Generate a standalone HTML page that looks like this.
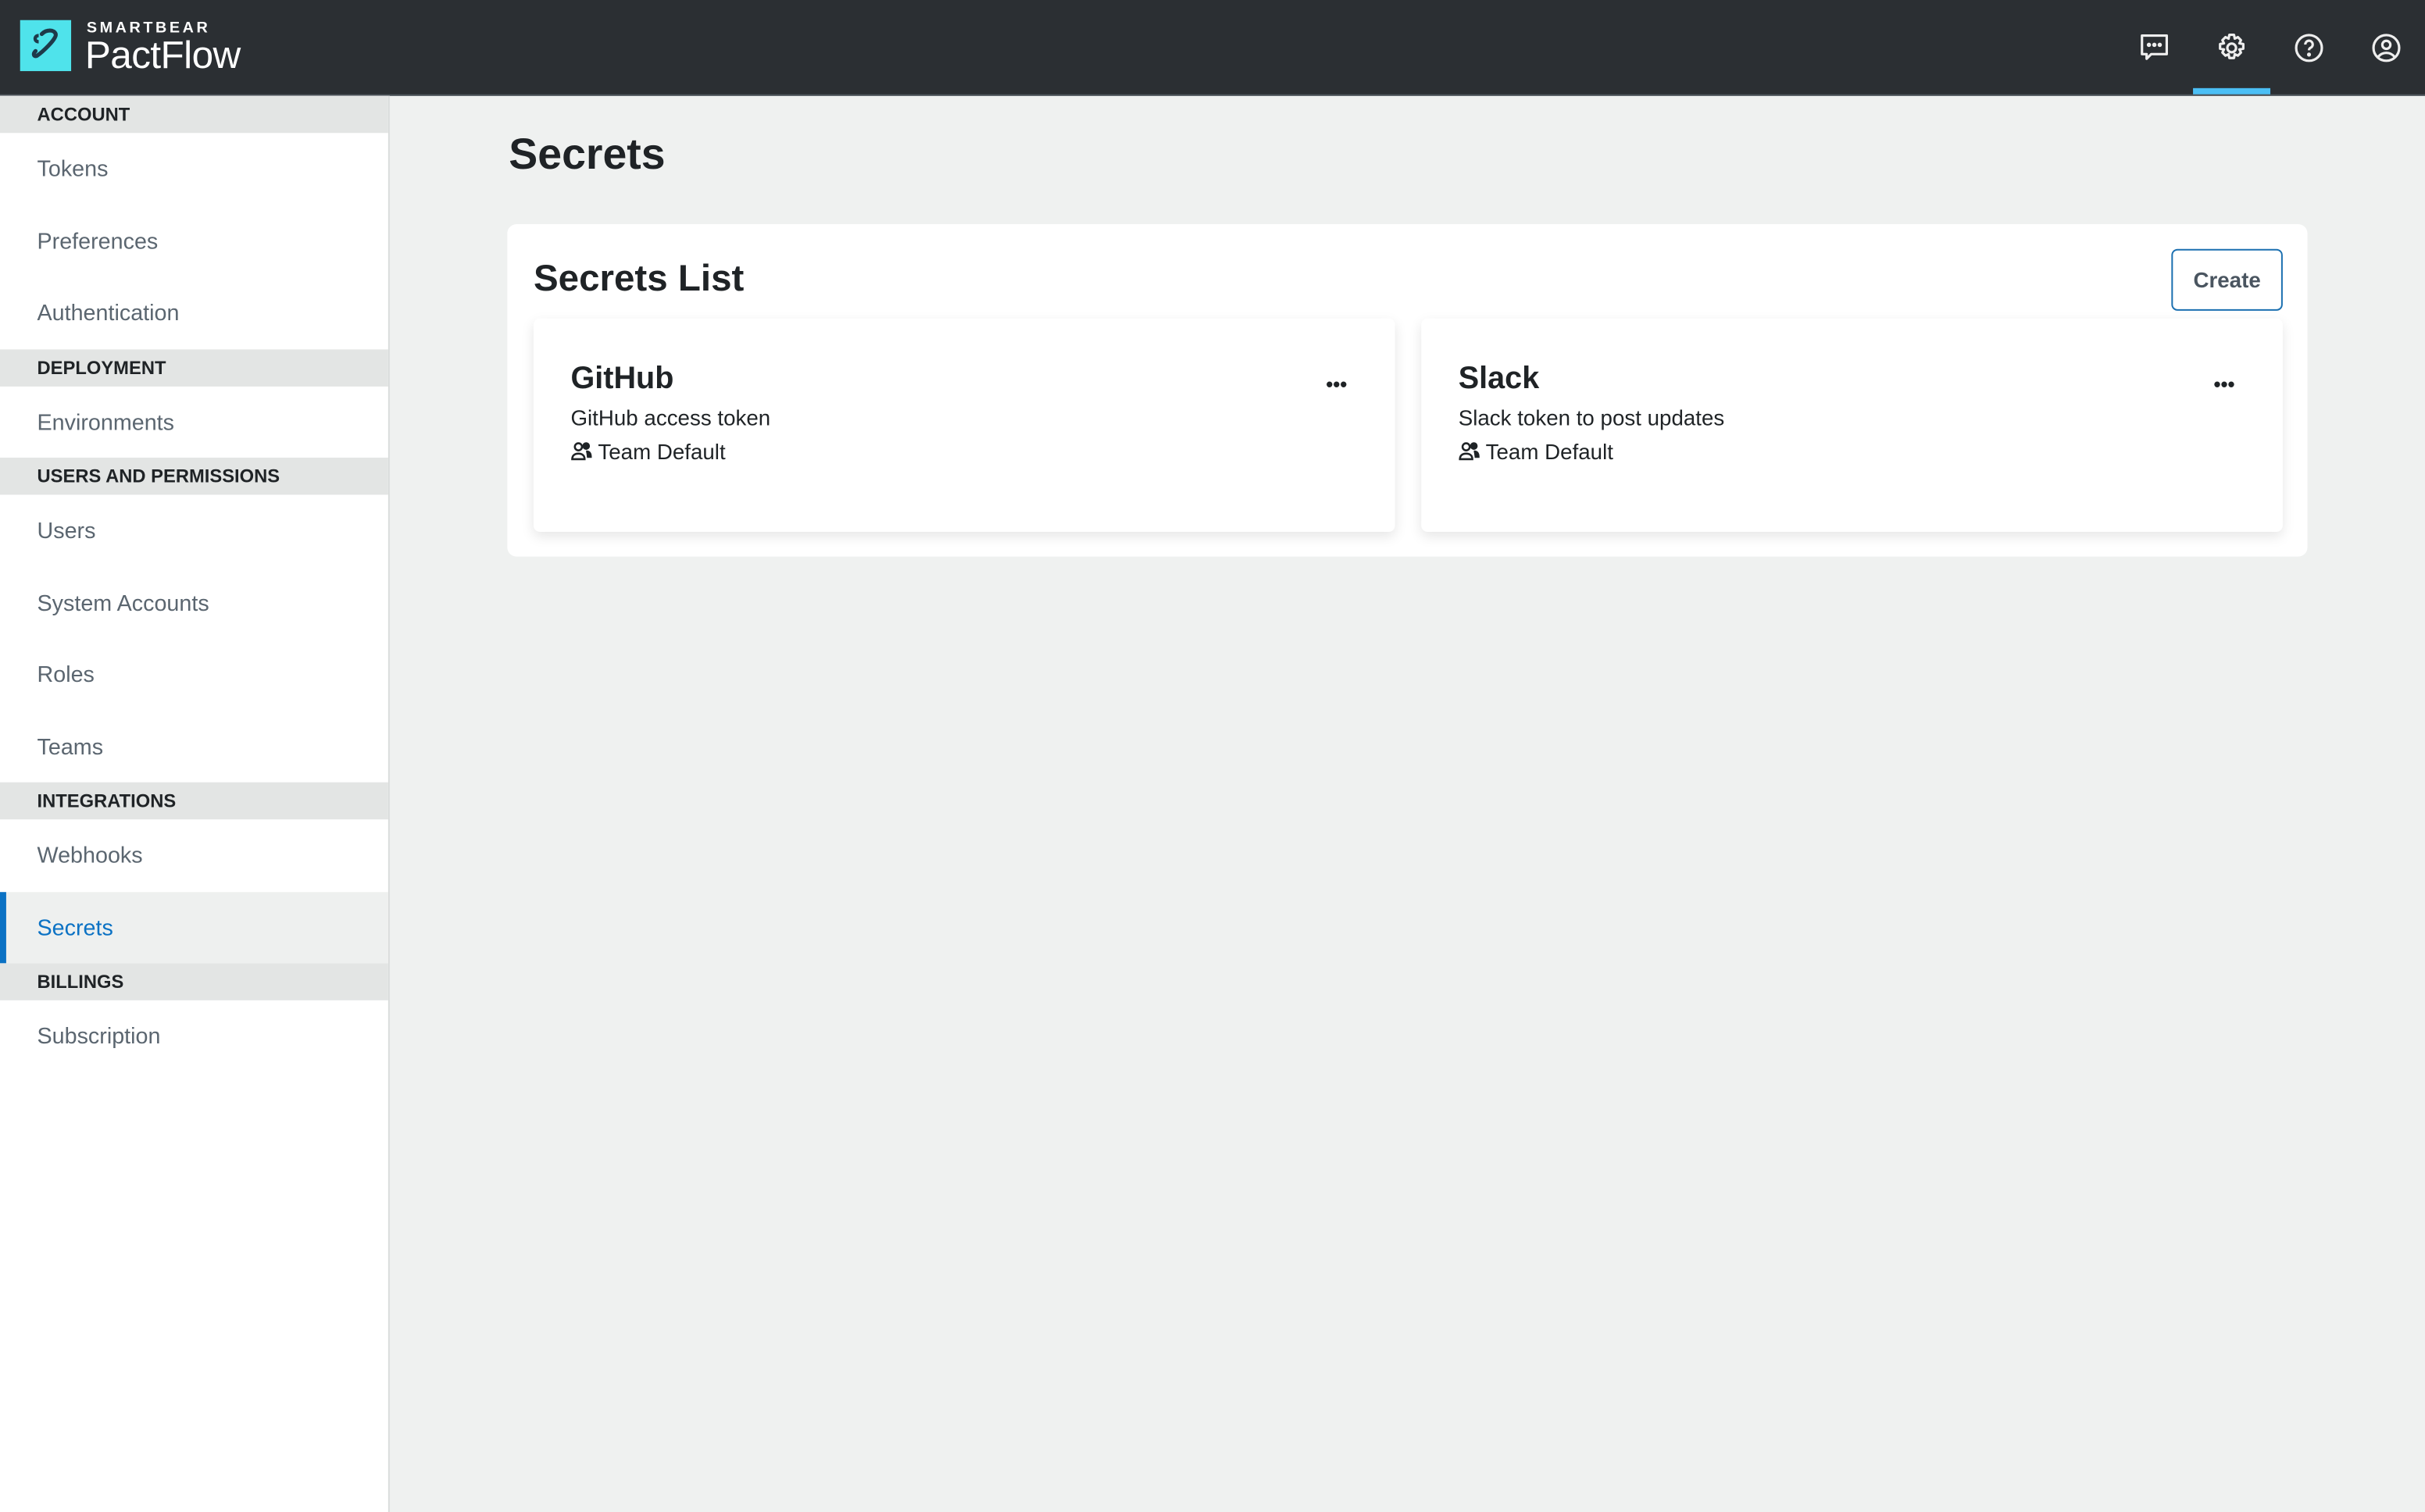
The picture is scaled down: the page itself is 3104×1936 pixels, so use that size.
<!DOCTYPE html>
<html><head><meta charset="utf-8"><style>
html,body{margin:0;padding:0;width:3104px;height:1936px;overflow:hidden;background:#eff1f0}
#w{position:absolute;left:0;top:0;width:1568px;height:978px;transform:scale(1.97959);transform-origin:0 0;font-family:"Liberation Sans",sans-serif;background:#eff1f0}
.hdr{position:absolute;left:0;top:0;width:1568px;height:62px;background:#2b2f33;border-bottom:1px solid #4e565c;box-sizing:border-box}
.logo{position:absolute;left:13px;top:13px;width:33px;height:33px;background:#4fe3eb}
.sb{position:absolute;left:56px;top:13px;color:#fff;font-size:10px;letter-spacing:1.8px;font-weight:bold}
.pf{position:absolute;left:55px;top:22px;color:#fff;font-size:25px;font-weight:normal;letter-spacing:-0.3px}
.ic{position:absolute;top:21px;width:20px;height:20px}
.ul{position:absolute;left:1418px;top:57px;width:50px;height:4px;background:#4bbff5}
.side{position:absolute;left:0;top:62px;width:251px;height:916px;background:#fff;border-right:1px solid #d9dcdb}
.sec{height:24px;background:#e3e5e4;font-size:12px;font-weight:bold;color:#1f2326;padding-left:24px;line-height:24px}
.it{height:46.5px;line-height:49px;padding-left:24px;font-size:14.5px;color:#5b6670;position:relative}
.it.act{background:#eef0ef;color:#0b72c4}
.it.act:before{content:"";position:absolute;left:0;top:0;bottom:0;width:4px;background:#0b72c4}
h1{position:absolute;left:329px;top:84px;margin:0;font-size:28px;color:#1f2326;font-weight:bold}
.panel{position:absolute;left:328px;top:145px;width:1164px;height:215px;background:#fff;border-radius:6px}
.pt{position:absolute;left:17px;top:22px;font-size:24px;font-weight:bold;color:#1f2326}
.btn{position:absolute;left:1076px;top:16px;width:70px;height:38px;border:1px solid #1a6fb0;border-radius:4px;font-size:14px;font-weight:bold;color:#4a5560;text-align:center;line-height:38px}
.card{position:absolute;top:61px;width:557px;height:138px;background:#fff;border-radius:4px;box-shadow:0 3px 8px rgba(0,0,0,.1)}
.ct{position:absolute;left:24px;top:28px;font-size:20px;font-weight:bold;color:#1f2326}
.cd{position:absolute;left:24px;top:56px;font-size:14px;color:#1f2326}
.cm{position:absolute;left:24px;top:78px;font-size:14px;color:#1f2326}
.dots{position:absolute;right:31px;top:35px;font-size:13px;font-weight:bold;color:#1f2326;letter-spacing:0}
</style></head><body><div id="w">
<div class="hdr">
<div class="logo"><svg width="33" height="33" viewBox="0 0 33 33"><path d="M14 9c3-3 8-3 9 0s-9 12-12 14c-2 1-3-1-1-3" fill="none" stroke="#1e3a4a" stroke-width="2.6" stroke-linecap="round"/><path d="M12 14c-3 0-3-4 0-4" fill="none" stroke="#1e3a4a" stroke-width="2.2"/></svg></div>
<div class="sb">SMARTBEAR</div>
<div class="pf">PactFlow</div>
<svg class="ic" style="left:1383px" viewBox="0 0 20 20" fill="none" stroke="#eee" stroke-width="1.6"><path d="M2 2h16v12H8l-3 3v-3H2z" stroke-linejoin="round"/><circle cx="6.5" cy="8" r=".6" fill="#eee"/><circle cx="10" cy="8" r=".6" fill="#eee"/><circle cx="13.5" cy="8" r=".6" fill="#eee"/></svg>
<svg class="ic" style="left:1433px" viewBox="0 0 20 20" fill="none" stroke="#eee" stroke-width="1.6"><path d="M8.5 1.5h3l.5 2.5 2-1 2 2-1 2 2.5.5v3l-2.5.5 1 2-2 2-2-1-.5 2.5h-3l-.5-2.5-2 1-2-2 1-2-2.5-.5v-3l2.5-.5-1-2 2-2 2 1z" stroke-linejoin="round"/><circle cx="10" cy="10" r="2.8"/></svg>
<svg class="ic" style="left:1483px" viewBox="0 0 20 20" fill="none" stroke="#eee" stroke-width="1.6"><circle cx="10" cy="10" r="8.3"/><path d="M7.6 7.8a2.4 2.4 0 1 1 3.4 2.1c-.7.4-1 .8-1 1.6"/><circle cx="10" cy="14.3" r=".5" fill="#eee"/></svg>
<svg class="ic" style="left:1533px" viewBox="0 0 20 20" fill="none" stroke="#eee" stroke-width="1.6"><circle cx="10" cy="10" r="8.3"/><circle cx="10" cy="8" r="2.6"/><path d="M4.5 16c1.5-2 3.3-2.8 5.5-2.8s4 .8 5.5 2.8"/></svg>
<div class="ul"></div>
</div>
<div class="side">
<div class="sec">ACCOUNT</div>
<div class="it">Tokens</div><div class="it">Preferences</div><div class="it">Authentication</div>
<div class="sec">DEPLOYMENT</div>
<div class="it">Environments</div>
<div class="sec">USERS AND PERMISSIONS</div>
<div class="it">Users</div><div class="it">System Accounts</div><div class="it">Roles</div><div class="it">Teams</div>
<div class="sec">INTEGRATIONS</div>
<div class="it">Webhooks</div><div class="it act">Secrets</div>
<div class="sec">BILLINGS</div>
<div class="it">Subscription</div>
</div>
<h1>Secrets</h1>
<div class="panel">
<div class="pt">Secrets List</div>
<div class="btn">Create</div>
<div class="card" style="left:17px"><div class="ct">GitHub</div><div class="cd">GitHub access token</div><div class="cm"><svg width="14" height="13" viewBox="0 0 14 13" fill="none" stroke="#1f2326" stroke-width="1.3" style="vertical-align:-1px"><circle cx="5" cy="4" r="2.3"/><path d="M1 12c0-2.5 1.8-3.6 4-3.6s4 1.1 4 3.6z"/><circle cx="10" cy="3.5" r="1.8" fill="#1f2326"/><path d="M10 7c2 0 3 1 3 3.5h-2.5" fill="#1f2326"/></svg> Team Default</div><div class="dots">•••</div></div>
<div class="card" style="left:591px"><div class="ct">Slack</div><div class="cd">Slack token to post updates</div><div class="cm"><svg width="14" height="13" viewBox="0 0 14 13" fill="none" stroke="#1f2326" stroke-width="1.3" style="vertical-align:-1px"><circle cx="5" cy="4" r="2.3"/><path d="M1 12c0-2.5 1.8-3.6 4-3.6s4 1.1 4 3.6z"/><circle cx="10" cy="3.5" r="1.8" fill="#1f2326"/><path d="M10 7c2 0 3 1 3 3.5h-2.5" fill="#1f2326"/></svg> Team Default</div><div class="dots">•••</div></div>
</div>
</div></body></html>
